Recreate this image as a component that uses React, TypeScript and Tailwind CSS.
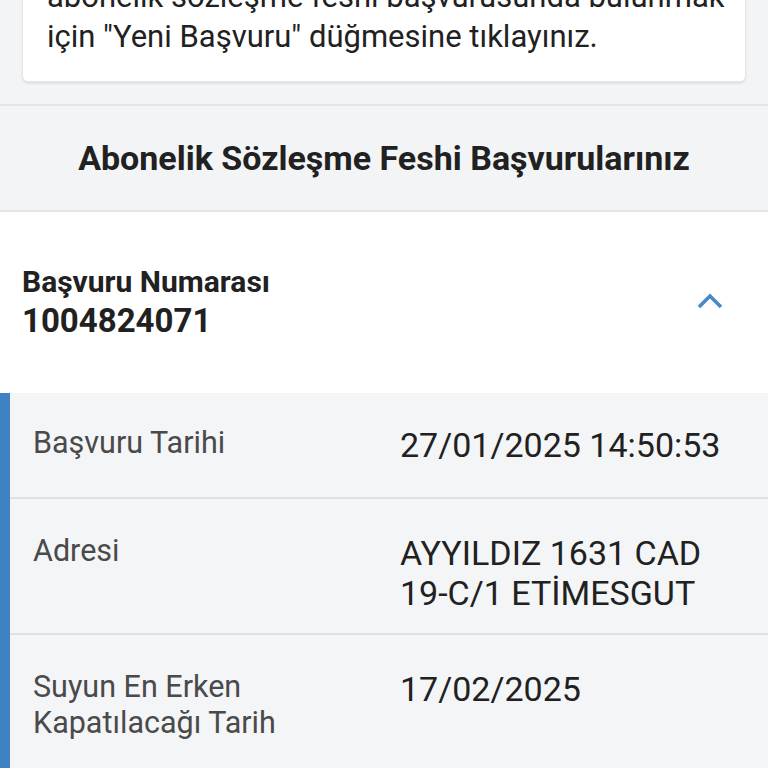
const rows = [
  { label: ['Başvuru Tarihi'], value: ['27/01/2025 14:50:53'], pad: 'pt-[32px] pb-[32px]' },
  { label: ['Adresi'], value: ['AYYILDIZ 1631 CAD', '19-C/1 ETİMESGUT'], pad: 'pt-[34px] pb-[20px]' },
  { label: ['Suyun En Erken', 'Kapatılacağı Tarih'], value: ['17/02/2025'], pad: 'pt-[34px] pb-8' },
]

export default function App() {
  return (
    <div className="h-[768px] w-full overflow-hidden bg-[#f3f4f6] font-['Roboto','Liberation_Sans',sans-serif] text-[#212121]">
      <div className="px-[22px] pb-[22px]">
        <div className="-mt-[44px] rounded-md border border-[#e4e5e7] bg-white px-6 pt-5 pb-6 shadow-[0_2px_2px_rgba(0,0,0,0.08)]">
          <p className="text-[31px] leading-[40px] whitespace-nowrap">
            abonelik sözleşme feshi başvurusunda bulunmak
            <br />
            için "Yeni Başvuru" düğmesine tıklayınız.
          </p>
        </div>
      </div>

      <div className="border-y-2 border-[#e3e4e6] bg-[#f3f4f6]">
        <h1 className="flex h-[104px] items-center justify-center text-[34px] font-bold whitespace-nowrap">
          Abonelik Sözleşme Feshi Başvurularınız
        </h1>
      </div>

      <div className="flex h-[181px] items-center justify-between bg-white pl-[22px] pr-[45px]">
        <div>
          <div className="text-[30px] leading-[34px] font-bold">Başvuru Numarası</div>
          <div className="mt-0.5 text-[33px] leading-[40px] font-bold">1004824071</div>
        </div>
        <svg width="26" height="16" viewBox="0 0 26 16" fill="none" className="mb-1">
          <polyline points="2,14 13,3 24,14" stroke="#4a88c7" strokeWidth="3.6" />
        </svg>
      </div>

      <div className="border-l-[10px] border-[#3f82c1] bg-[#f4f5f7]">
        {rows.map((row, i) => (
          <div
            key={i}
            className={`flex pl-[23px] ${row.pad} ${i > 0 ? 'border-t-2 border-[#e0e1e3]' : ''}`}
          >
            <div className="w-[367px] shrink-0 text-[30.5px] leading-[36px] text-[#4a4a4a]">
              {row.label.map((l) => (
                <div key={l}>{l}</div>
              ))}
            </div>
            <div className="text-[34px] leading-[40px] text-[#212121]">
              {row.value.map((v) => (
                <div key={v}>{v}</div>
              ))}
            </div>
          </div>
        ))}
      </div>
    </div>
  )
}
